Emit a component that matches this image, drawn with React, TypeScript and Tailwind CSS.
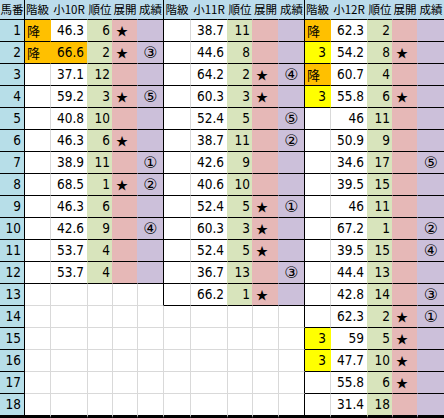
import React from 'react';

interface Row {
  k?: string;
  v?: string;
  hot?: boolean;
  r?: string;
  s?: boolean;
  c?: string;
}

type Fill = 'none' | 'green' | 'pink' | 'lav' | 'orange' | 'yellow';

const bgCls: Record<Fill, string> = {
  none: 'bg-white',
  green: 'bg-[#d8e4bc]',
  pink: 'bg-[#e6b8b7]',
  lav: 'bg-[#ccc0da]',
  orange: 'bg-[#ffc000]',
  yellow: 'bg-[#ffff00]',
};

const rightCls: Record<Fill | 'gray' | 'black', string> = {
  none: 'border-r-white',
  gray: 'border-r-[#d9d9d9]',
  black: 'border-r-black',
  green: 'border-r-[#d8e4bc]',
  pink: 'border-r-[#e6b8b7]',
  lav: 'border-r-[#ccc0da]',
  orange: 'border-r-[#ffc000]',
  yellow: 'border-r-[#ffff00]',
};

const NUM = "font-['DejaVu_Sans_Condensed','DejaVu_Sans',sans-serif] text-[13.5px] font-stretch-condensed";
const JP = "font-['Noto_Sans_CJK_JP',sans-serif]";
const CIRC = "font-['DejaVu_Sans',sans-serif] text-[16px]";

const groups: { label: string; widths: string[]; rows: Row[] }[] = [
  {
    label: '小10R',
    widths: ['w-[26px]', 'w-[37px]', 'w-[25px]', 'w-[25px]', 'w-[26px]'],
    rows: [
      { k: '降', v: '46.3', r: '6', s: true },
      { k: '降', v: '66.6', hot: true, r: '2', s: true, c: '③' },
      { v: '37.1', r: '12' },
      { v: '59.2', r: '3', s: true, c: '⑤' },
      { v: '40.8', r: '10' },
      { v: '46.3', r: '6', s: true },
      { v: '38.9', r: '11', c: '①' },
      { v: '68.5', r: '1', s: true, c: '②' },
      { v: '46.3', r: '6' },
      { v: '42.6', r: '9', c: '④' },
      { v: '53.7', r: '4' },
      { v: '53.7', r: '4' },
    ],
  },
  {
    label: '小11R',
    widths: ['w-[27px]', 'w-[37px]', 'w-[25px]', 'w-[26px]', 'w-[26px]'],
    rows: [
      { v: '38.7', r: '11' },
      { v: '44.6', r: '8' },
      { v: '64.2', r: '2', s: true, c: '④' },
      { v: '60.3', r: '3', s: true },
      { v: '52.4', r: '5', c: '⑤' },
      { v: '38.7', r: '11', c: '②' },
      { v: '42.6', r: '9' },
      { v: '40.6', r: '10' },
      { v: '52.4', r: '5', s: true, c: '①' },
      { v: '60.3', r: '3', s: true },
      { v: '52.4', r: '5', s: true },
      { v: '36.7', r: '13', c: '③' },
      { v: '66.2', r: '1', s: true },
    ],
  },
  {
    label: '小12R',
    widths: ['w-[26px]', 'w-[37px]', 'w-[25px]', 'w-[25px]', 'flex-1'],
    rows: [
      { k: '降', v: '62.3', r: '2' },
      { k: '3', v: '54.2', r: '8', s: true },
      { k: '降', v: '60.7', r: '4' },
      { k: '3', v: '55.8', r: '6', s: true },
      { v: '46', r: '11' },
      { v: '50.9', r: '9' },
      { v: '34.6', r: '17', c: '⑤' },
      { v: '39.5', r: '15' },
      { v: '46', r: '11' },
      { v: '67.2', r: '1', c: '②' },
      { v: '39.5', r: '15', c: '④' },
      { v: '44.4', r: '13' },
      { v: '42.8', r: '14', c: '③' },
      { v: '62.3', r: '2', s: true, c: '①' },
      { k: '3', v: '59', r: '5', s: true },
      { k: '3', v: '47.7', r: '10', s: true },
      { v: '55.8', r: '6', s: true },
      { v: '31.4', r: '18' },
    ],
  },
];

const heads = ['階級', '', '順位', '展開', '成績'];

function fills(row: Row | undefined): Fill[] {
  if (!row) return ['none', 'none', 'none', 'none', 'none'];
  const k: Fill = row.k === '降' ? 'orange' : row.k ? 'yellow' : 'none';
  return [k, row.hot ? 'orange' : 'none', 'green', 'pink', 'lav'];
}

function GroupCells({ gi, ri, last }: { gi: number; ri: number; last: boolean }) {
  const g = groups[gi];
  const row = g.rows[ri];
  const f = fills(row);
  const nextHas = gi < 2 && !!groups[gi + 1].rows[ri];
  const bottom = last ? 'border-b-[3px] border-b-black' : row ? 'border-b border-b-black' : 'border-b border-b-[#d9d9d9]';

  return (
    <>
      {[0, 1, 2, 3, 4].map(ci => {
        let rc: string;
        if (ci === 4) {
          if (gi === 2) rc = 'border-r-0';
          else rc = 'border-r ' + (row || nextHas ? rightCls.black : rightCls.gray);
        } else {
          const pick: Fill | 'gray' = f[ci + 1] !== 'none' ? f[ci + 1] : f[ci] !== 'none' ? f[ci] : 'gray';
          rc = 'border-r ' + rightCls[pick];
        }
        let content: React.ReactNode = null;
        let align = 'justify-end pr-[3px]';
        if (row) {
          if (ci === 0 && row.k) {
            if (row.k === '降') {
              content = <span className={`${JP} text-[13px]`}>降</span>;
              align = 'justify-start pl-[2px]';
            } else {
              content = <span className={NUM}>{row.k}</span>;
              align = 'justify-end pr-[4px]';
            }
          }
          if (ci === 1) content = <span className={NUM}>{row.v}</span>;
          if (ci === 2) {
            content = <span className={NUM}>{row.r}</span>;
            align = 'justify-end pr-[2px]';
          }
          if (ci === 3 && row.s) {
            content = <span className={`${JP} text-[12px]`}>★</span>;
            align = 'justify-start pl-[3px]';
          }
          if (ci === 4 && row.c) {
            content = <span className={CIRC}>{row.c}</span>;
            align = 'justify-center';
          }
        }
        return (
          <div
            key={ci}
            className={`${g.widths[ci]} shrink-0 flex items-center ${align} ${bgCls[f[ci]]} ${rc} ${bottom}`}
          >
            {content}
          </div>
        );
      })}
    </>
  );
}

export default function App() {
  const rows = Array.from({ length: 18 }, (_, i) => i);

  return (
    <div className="w-[444px] h-[418px] overflow-hidden bg-white text-black leading-none">
      {/* header */}
      <div className="flex h-[20px]">
        <div className={`w-[25px] shrink-0 flex items-center justify-center bg-[#bcdcec] border-r border-r-black border-b border-b-black ${JP} text-[11.5px] whitespace-nowrap`}>
          馬番
        </div>
        {groups.map((g, gi) =>
          [0, 1, 2, 3, 4].map(ci => (
            <div
              key={`${gi}-${ci}`}
              className={`${g.widths[ci]} shrink-0 flex items-center justify-center bg-[#bcdcec] border-b border-b-black ${
                ci === 4 && gi < 2 ? 'border-r border-r-black' : ci === 4 ? '' : 'border-r border-r-[#bcdcec]'
              } ${JP} text-[11.5px] whitespace-nowrap overflow-visible`}
            >
              {ci === 1 ? g.label : heads[ci]}
            </div>
          ))
        )}
      </div>

      {/* body */}
      {rows.map(ri => {
        const last = ri === 17;
        return (
          <div key={ri} className={`flex ${last ? 'h-[24px]' : 'h-[22px]'}`}>
            <div
              className={`w-[25px] shrink-0 flex items-center justify-end pr-[3px] bg-[#b7dee8] border-r border-r-black ${
                last ? 'border-b-[3px] border-b-black' : 'border-b border-b-black'
              }`}
            >
              <span className={NUM}>{ri + 1}</span>
            </div>
            {groups.map((_, gi) => (
              <GroupCells key={gi} gi={gi} ri={ri} last={last} />
            ))}
          </div>
        );
      })}
    </div>
  );
}
